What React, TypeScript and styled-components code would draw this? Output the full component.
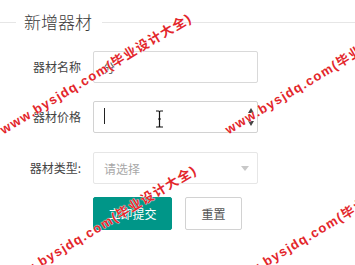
import React from "react";
import styled, { createGlobalStyle } from "styled-components";

const Global = createGlobalStyle`
  html, body { margin: 0; padding: 0; background: #fff; }
  body { font-family: "Noto Sans CJK SC", "Liberation Sans", sans-serif; }
  * { box-sizing: border-box; }
`;

const Page = styled.div`
  position: relative;
  width: 355px;
  height: 265px;
  overflow: hidden;
  padding-top: 9px;
`;

const FieldHeader = styled.div`
  display: flex;
  align-items: center;
  height: 26px;
  &::before {
    content: "";
    width: 16px;
    height: 1px;
    background: #e6e6e6;
  }
  &::after {
    content: "";
    flex: 1;
    height: 1px;
    background: #e6e6e6;
  }
`;

const Legend = styled.span`
  font-size: 17px;
  font-weight: 300;
  color: #3a3a3a;
  line-height: 26px;
  padding: 0 10px 0 8px;
`;

const Form = styled.div`
  display: flex;
  flex-direction: column;
  padding-top: 16px;
`;

const Row = styled.div<{ $space?: number }>`
  display: grid;
  grid-template-columns: 81px 165px;
  column-gap: 12px;
  align-items: center;
  margin-top: ${(p) => p.$space ?? 0}px;
`;

const Label = styled.label`
  text-align: right;
  font-size: 12px;
  color: #444;
  line-height: 16px;
`;

const Field = styled.div`
  position: relative;
  height: 32px;
`;

const TextInput = styled.input<{ $border?: string }>`
  display: block;
  width: 100%;
  height: 32px;
  border: 1px solid ${(p) => p.$border ?? "#d9d9d9"};
  border-radius: 2px;
  padding: 0 9px;
  font-family: inherit;
  font-size: 12px;
  color: #555;
  background: #fff;
  outline: none;
  -moz-appearance: textfield;
  &::-webkit-inner-spin-button,
  &::-webkit-outer-spin-button {
    -webkit-appearance: none;
    margin: 0;
  }
`;

const Caret = styled.span`
  position: absolute;
  left: 11px;
  top: 7px;
  width: 1px;
  height: 16px;
  background: #222;
`;

const MouseCursor = styled.svg`
  position: absolute;
  left: 62px;
  top: 9px;
`;

const SpinArrow = styled.span<{ $down?: boolean }>`
  position: absolute;
  right: 4px;
  top: ${(p) => (p.$down ? 20 : 7)}px;
  width: 0;
  height: 0;
  border-left: 3.5px solid transparent;
  border-right: 3.5px solid transparent;
  ${(p) =>
    p.$down
      ? "border-top: 5px solid #444;"
      : "border-bottom: 5px solid #444;"}
`;

const SelectBox = styled.div`
  position: relative;
  height: 32px;
  border: 1px solid #e6e6e6;
  border-radius: 2px;
  padding: 0 10px;
  display: flex;
  align-items: center;
  background: #fff;
`;

const Placeholder = styled.span`
  font-size: 12px;
  color: #a8a8a8;
`;

const SelectCaret = styled.span`
  position: absolute;
  right: 8px;
  top: 13px;
  width: 0;
  height: 0;
  border-left: 4px solid transparent;
  border-right: 4px solid transparent;
  border-top: 5px solid #c8c8c8;
`;

const Buttons = styled.div`
  display: flex;
  gap: 13px;
  align-items: center;
`;

const Button = styled.button<{ $primary?: boolean }>`
  height: 33px;
  padding: 0;
  width: ${(p) => (p.$primary ? 79 : 57)}px;
  border-radius: 2px;
  font-family: inherit;
  font-size: 12px;
  cursor: pointer;
  border: 1px solid ${(p) => (p.$primary ? "#009688" : "#d2d2d2")};
  background: ${(p) => (p.$primary ? "#009688" : "#fff")};
  color: ${(p) => (p.$primary ? "#fff" : "#555")};
`;

const Watermark = styled.span<{ $x: number; $y: number }>`
  position: absolute;
  left: ${(p) => p.$x}px;
  top: ${(p) => p.$y - 15}px;
  line-height: 15px;
  transform-origin: 0 100%;
  transform: rotate(-31deg);
  white-space: nowrap;
  pointer-events: none;
  font-family: "Liberation Sans", "Noto Sans CJK SC", sans-serif;
  font-weight: bold;
  font-size: 13px;
  letter-spacing: 1.3px;
  color: #e3262b;
  text-shadow: 0 0 1px #fff, 0 0 1px #fff;
`;

const marks = [
  { x: 5, y: 137 },
  { x: 230, y: 137 },
  { x: 10, y: 289 },
  { x: 235, y: 289 },
];

export default function App() {
  return (
    <Page>
      <Global />
      <FieldHeader>
        <Legend>新增器材</Legend>
      </FieldHeader>
      <Form>
        <Row>
          <Label>器材名称</Label>
          <Field>
            <TextInput defaultValue="分" />
          </Field>
        </Row>
        <Row $space={18}>
          <Label>器材价格</Label>
          <Field>
            <TextInput type="number" $border="#d2d2d2" />
            <Caret />
            <SpinArrow />
            <SpinArrow $down />
            <MouseCursor width="9" height="18" viewBox="0 0 9 18">
              <path
                d="M1 1 H3.5 Q4.5 1 4.5 2.5 Q4.5 1 5.5 1 H8 M4.5 2.5 V15.5 M1 17 H3.5 Q4.5 17 4.5 15.5 Q4.5 17 5.5 17 H8 M3 9 H6"
                fill="none"
                stroke="#fff"
                strokeWidth="3"
              />
              <path
                d="M1 1 H3.5 Q4.5 1 4.5 2.5 Q4.5 1 5.5 1 H8 M4.5 2.5 V15.5 M1 17 H3.5 Q4.5 17 4.5 15.5 Q4.5 17 5.5 17 H8 M3 9 H6"
                fill="none"
                stroke="#111"
                strokeWidth="1.2"
              />
            </MouseCursor>
          </Field>
        </Row>
        <Row $space={19}>
          <Label>器材类型:</Label>
          <SelectBox>
            <Placeholder>请选择</Placeholder>
            <SelectCaret />
          </SelectBox>
        </Row>
        <Row $space={13}>
          <span />
          <Buttons>
            <Button $primary>立即提交</Button>
            <Button>重置</Button>
          </Buttons>
        </Row>
      </Form>
      {marks.map((m, i) => (
        <Watermark key={i} $x={m.x} $y={m.y}>
          www.bysjdq.com(毕业设计大全)
        </Watermark>
      ))}
    </Page>
  );
}
